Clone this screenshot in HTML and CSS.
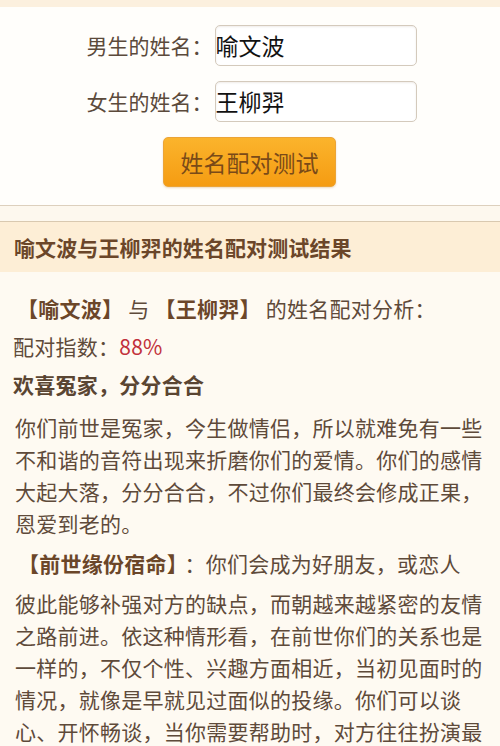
FILE: index.html
```html
<!DOCTYPE html>
<html lang="zh-CN">
<head>
<meta charset="utf-8">
<title>姓名配对测试</title>
<link rel="stylesheet" href="styles.css">
</head>
<body>
<div class="topstrip"></div>
<form class="form-panel">
  <div class="row">
    <label class="label">男生的姓名：</label>
    <div class="input">喻文波</div>
  </div>
  <div class="row">
    <label class="label">女生的姓名：</label>
    <div class="input">王柳羿</div>
  </div>
  <div class="btn-row">
    <div class="btn">姓名配对测试</div>
  </div>
</form>
<div class="divider"></div>
<section class="result">
  <h2 class="result-title">喻文波与王柳羿的姓名配对测试结果</h2>
  <div class="result-body">
    <p class="line bracket"><b class="hl">【喻文波】</b> 与 <b class="hl">【王柳羿】</b> 的姓名配对分析：</p>
    <p class="line">配对指数：<span class="score">88%</span></p>
    <p class="line strong">欢喜冤家，分分合合</p>
    <p class="para">你们前世是冤家，今生做情侣，所以就难免有一些不和谐的音符出现来折磨你们的爱情。你们的感情大起大落，分分合合，不过你们最终会修成正果，恩爱到老的。</p>
    <p class="para sub"><b class="hl gap">【前世缘份宿命】</b>：你们会成为好朋友，或恋人</p>
    <p class="para">彼此能够补强对方的缺点，而朝越来越紧密的友情之路前进。依这种情形看，在前世你们的关系也是一样的，不仅个性、兴趣方面相近，当初见面时的情况，就像是早就见过面似的投缘。你们可以谈心、开怀畅谈，当你需要帮助时，对方往往扮演最重要的角色。</p>
  </div>
</section>
</body>
</html>
```
FILE: styles.css
```css
* { box-sizing: border-box; }
html, body {
  margin: 0;
  padding: 0;
}
body {
  width: 500px;
  height: 746px;
  overflow: hidden;
  background: #fefaf2;
  font-family: "Noto Sans CJK SC", "Noto Sans", sans-serif;
  color: #5e4a3a;
}
.topstrip {
  height: 7px;
  background: #fcf0de;
}
.form-panel {
  margin: 0;
  background: #fffefb;
  padding: 18px 0 18px;
  display: flex;
  flex-direction: column;
  align-items: center;
  gap: 15px;
}
.row {
  display: flex;
  align-items: center;
  height: 41px;
  padding-left: 3px;
}
.label {
  font-size: 21px;
  color: #5b4a3b;
  width: 128px;
  line-height: 41px;
  white-space: nowrap;
}
.input {
  width: 202px;
  height: 41px;
  border: 1px solid #d4cabc;
  border-radius: 5px;
  background: #fff;
  box-shadow: inset 0 1px 2px rgba(120, 100, 70, 0.12);
  font-size: 23px;
  line-height: 38px;
  color: #111;
  padding-left: 0;
}
.btn-row {
  display: flex;
  justify-content: center;
}
.btn {
  width: 173px;
  height: 50px;
  border-radius: 5px;
  background: linear-gradient(#fbb42c, #f59c12);
  border: 1px solid #eba437;
  box-shadow: 0 1px 2px rgba(180, 110, 20, 0.25);
  color: #7a4a18;
  font-size: 23px;
  line-height: 48px;
  text-align: center;
  margin-left: -1px;
}
.divider {
  height: 17px;
  border-top: 1px solid #ddd0bd;
  border-bottom: 1px solid #d9c9b0;
  background: #fdf8ee;
}
.result-title {
  margin: 0;
  height: 50px;
  background: #fdeed6;
  padding-left: 14px;
  font-size: 21px;
  font-weight: 700;
  line-height: 50px;
  color: #6b4629;
  letter-spacing: 0.1px;
}
.result-body {
  padding: 17px 15px 0 13px;
  font-size: 21px;
  letter-spacing: 0.25px;
}
.line {
  margin: 0;
  line-height: 38px;
}
.line.bracket {
  padding-left: 4px;
}
.hl {
  color: #6b4629;
  font-weight: 700;
}
.hl.gap {
  margin-right: 7px;
}
.score {
  color: #c2313b;
}
.strong {
  font-weight: 700;
  color: #5a4532;
}
.para {
  margin: 8px 0 0;
  line-height: 32px;
  padding-left: 2px;
}
.para.sub {
  padding-left: 5px;
}
```
